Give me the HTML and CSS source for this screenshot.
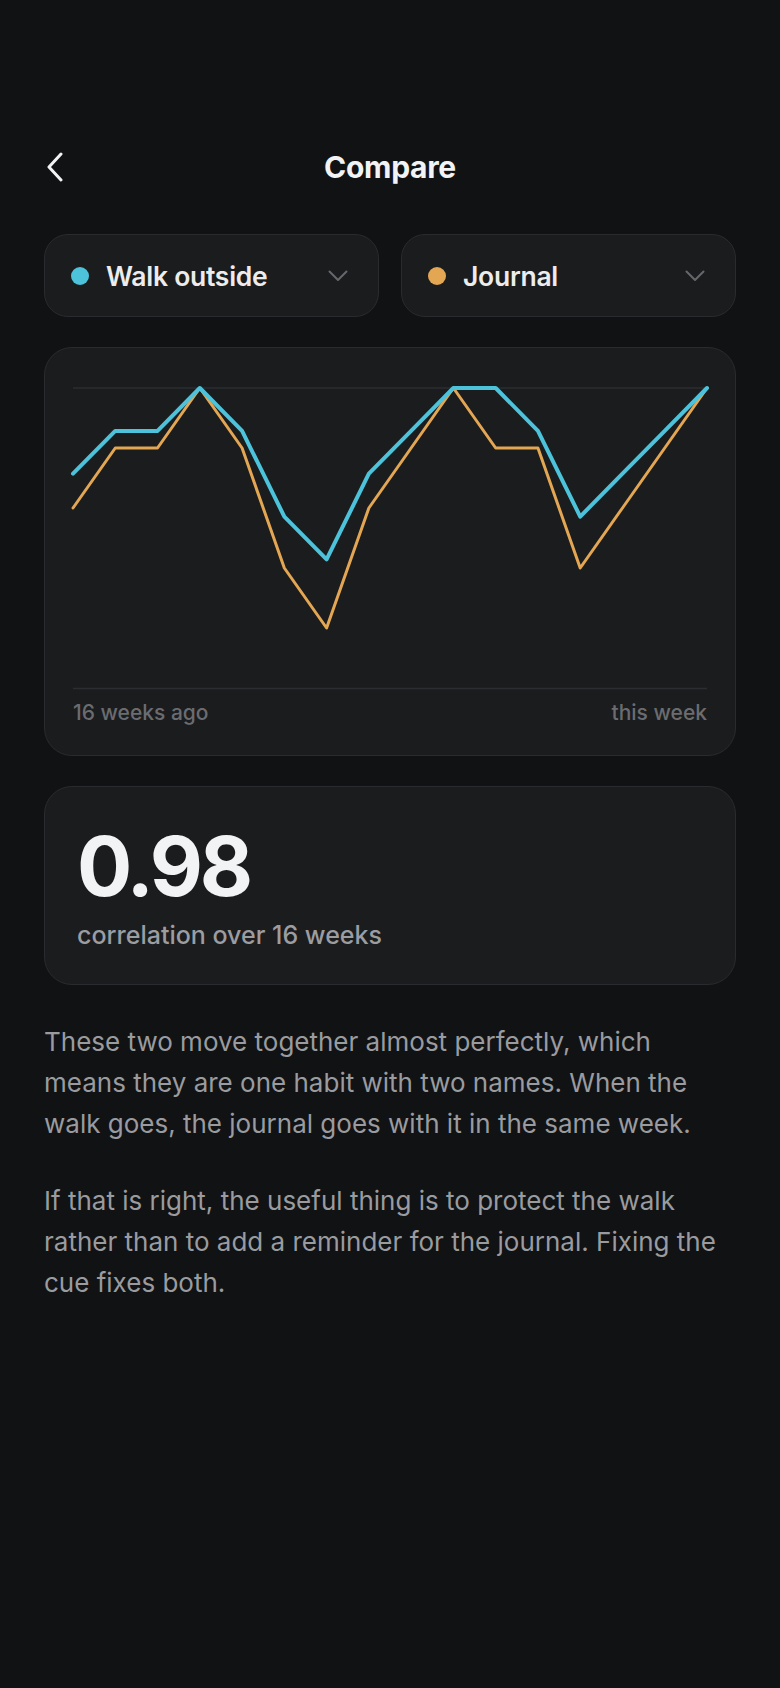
FILE: index.html
```html
<!DOCTYPE html>
<html lang="en">
<head>
    <meta charset="UTF-8">
    <meta name="viewport" content="width=device-width, initial-scale=1.0">
    <title>Compare</title>
    <link rel="stylesheet" href="styles.css">
</head>
<body>
    <main class="screen">
        <!-- Header -->
        <header class="topbar">
            <a href="#" class="back-btn" aria-label="Back">
                <svg width="18" height="30" viewBox="0 0 18 30">
                    <path d="M15 2 L3 15 L15 28" fill="none" stroke="#f2f3f5" stroke-width="3" stroke-linecap="round" stroke-linejoin="round"/>
                </svg>
            </a>
            <h1 class="topbar-title">Compare</h1>
            <span></span>
        </header>

        <!-- Habit pickers -->
        <section class="pickers">
            <button class="picker">
                <span class="dot dot-walk"></span>
                <span class="picker-name">Walk outside</span>
                <svg class="picker-chevron" width="20" height="12" viewBox="0 0 20 12">
                    <path d="M1.5 1.5 L10 10 L18.5 1.5" fill="none" stroke="#66676b" stroke-width="2" stroke-linecap="round" stroke-linejoin="round"/>
                </svg>
            </button>
            <button class="picker">
                <span class="dot dot-journal"></span>
                <span class="picker-name">Journal</span>
                <svg class="picker-chevron" width="20" height="12" viewBox="0 0 20 12">
                    <path d="M1.5 1.5 L10 10 L18.5 1.5" fill="none" stroke="#66676b" stroke-width="2" stroke-linecap="round" stroke-linejoin="round"/>
                </svg>
            </button>
        </section>

        <!-- Weekly chart, each line scaled to its own best week -->
        <section class="card chart-card">
            <svg class="chart" viewBox="0 0 634 314" preserveAspectRatio="none">
                <line x1="0" y1="12" x2="634" y2="12" class="grid-line"/>
                <line x1="0" y1="312.5" x2="634" y2="312.5" class="grid-line"/>
                <!-- journal: 3,4,4,5,4,2,1,3,4,5,4,4,2,3,4,5 of 5 -->
                <polyline class="series series-journal" points="0,132 42.27,72 84.53,72 126.8,12 169.07,72 211.33,192 253.6,252 295.87,132 338.13,72 380.4,12 422.67,72 464.93,72 507.2,192 549.47,132 591.73,72 634,12"/>
                <!-- walk: 5,6,6,7,6,4,3,5,6,7,7,6,4,5,6,7 of 7 -->
                <polyline class="series series-walk" points="0,97.7 42.27,54.9 84.53,54.9 126.8,12 169.07,54.9 211.33,140.6 253.6,183.4 295.87,97.7 338.13,54.9 380.4,12 422.67,12 464.93,54.9 507.2,140.6 549.47,97.7 591.73,54.9 634,12"/>
            </svg>
            <div class="chart-labels">
                <span>16 weeks ago</span>
                <span>this week</span>
            </div>
        </section>

        <!-- Correlation -->
        <section class="card stat-card">
            <div class="stat-value">0.98</div>
            <div class="stat-label">correlation over 16 weeks</div>
        </section>

        <div class="insight">
            <p>These two move together almost perfectly, which means they are one habit with two names. When the walk goes, the journal goes with it in the same week.</p>
            <p>If that is right, the useful thing is to protect the walk rather than to add a reminder for the journal. Fixing the cue fixes both.</p>
        </div>
    </main>
</body>
</html>
```

FILE: styles.css
```css
* {
    margin: 0;
    padding: 0;
    box-sizing: border-box;
    font-family: Inter, 'Noto Sans', 'Liberation Sans', sans-serif;
}

body {
    background-color: #111214;
    min-height: 100vh;
    color: #f2f3f5;
}

.screen {
    padding: 145px 44px 0;
    display: flex;
    flex-direction: column;
}

/* Header */
.topbar {
    display: grid;
    grid-template-columns: 44px 1fr 44px;
    align-items: center;
    height: 44px;
}

.back-btn {
    display: flex;
    align-items: center;
    padding-left: 2px;
}

.topbar-title {
    text-align: center;
    font-size: 30px;
    font-weight: 700;
    letter-spacing: -0.01em;
    color: #f2f3f5;
}

/* Pickers */
.pickers {
    display: grid;
    grid-template-columns: 1fr 1fr;
    gap: 22px;
    margin-top: 45px;
}

.picker {
    display: flex;
    align-items: center;
    height: 83px;
    padding: 0 30px 0 26px;
    background-color: #1b1c1e;
    border: 1px solid #2a2b2e;
    border-radius: 24px;
    cursor: pointer;
    text-align: left;
}

.dot {
    width: 18px;
    height: 18px;
    border-radius: 50%;
    flex-shrink: 0;
}

.dot-walk {
    background-color: #4cc3da;
}

.dot-journal {
    background-color: #e3a653;
}

.picker-name {
    flex: 1;
    margin-left: 17px;
    font-size: 26.5px;
    font-weight: 600;
    color: #ececee;
    letter-spacing: -0.01em;
}

.picker-chevron {
    flex-shrink: 0;
}

/* Cards */
.card {
    background-color: #1b1c1e;
    border: 1px solid #2a2b2e;
    border-radius: 28px;
}

.chart-card {
    margin-top: 30px;
    padding: 28px 28px 29px;
}

.chart {
    display: block;
    width: 100%;
    height: 314px;
    overflow: visible;
}

.grid-line {
    stroke: #2c2d30;
    stroke-width: 1.5;
}

.series {
    fill: none;
    stroke-linejoin: round;
    stroke-linecap: round;
}

.series-walk {
    stroke: #4cc3da;
    stroke-width: 4;
}

.series-journal {
    stroke: #e3a653;
    stroke-width: 3;
}

.chart-labels {
    display: flex;
    justify-content: space-between;
    margin-top: 10px;
    font-size: 21px;
    line-height: 26px;
    font-weight: 500;
    color: #6b6c70;
}

.stat-card {
    margin-top: 30px;
    padding: 40px 32px 33px;
}

.stat-value {
    font-size: 82px;
    line-height: 80px;
    font-weight: 700;
    letter-spacing: -0.04em;
    color: #f2f3f5;
}

.stat-label {
    margin-top: 12px;
    font-size: 25px;
    line-height: 32px;
    font-weight: 500;
    color: #9c9da1;
}

/* Explanation */
.insight {
    margin-top: 36px;
    font-size: 26px;
    line-height: 41px;
    color: #9a9b9f;
}

.insight p + p {
    margin-top: 36px;
}
```
